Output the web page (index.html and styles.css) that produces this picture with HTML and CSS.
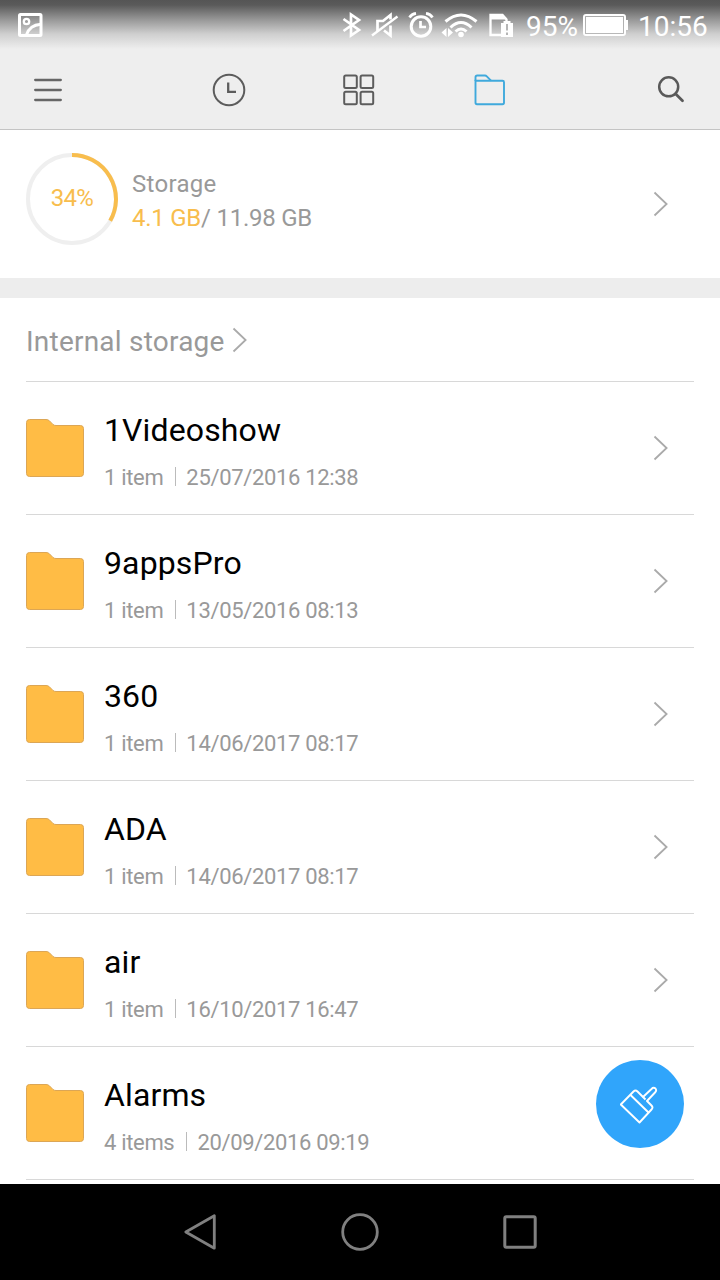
FILE: index.html
```html
<!DOCTYPE html>
<html lang="en">

<head>
    <meta charset="UTF-8">
    <meta name="viewport" content="width=device-width, initial-scale=1.0">
    <title>File Manager</title>
    <link rel="stylesheet" href="styles.css">
</head>

<body>

    <!-- Icons used more than once -->
    <svg class="sprite">
        <symbol id="arrow" viewBox="0 0 16 26">
            <path d="M1.5 1.5 13.6 13 1.5 24.5" fill="none" stroke="#aaa" stroke-width="1.8" />
        </symbol>
        <symbol id="folder" viewBox="0 0 58 58">
            <path d="M3.5 .5H20q2 0 3.3 1.200L27 5.500Q28 6.500 30 6.500H54.500q3 0 3 3v45q0 3-3 3h-51q-3 0-3-3v-51q0-3 3-3z" fill="#ffbc45" stroke="#dca655" />
        </symbol>
    </svg>

    <header class="header">
        <div class="status">
            <svg class="status-picture" width="26" height="26" viewBox="0 0 26 26" fill="none" stroke="#fff" stroke-width="3">
                <rect x="1.500" y="2.500" width="21.500" height="21" rx="1" />
                <circle cx="8.500" cy="9.500" r="2.700" stroke-width="2.300" />
                <path d="M8.500 23C10.500 16 15 12.800 23 12.200" />
            </svg>
            <svg class="status-icons" width="182" height="30" viewBox="0 0 182 30" fill="none" stroke="#fff" stroke-width="2.700">
                <!-- bluetooth -->
                <path d="M2.500 9 18 20 10 25.500V4.500L18 10 2.500 21" />
                <!-- muted -->
                <path d="M36.500 21V11H42L49.500 5V9.500M49.500 15.500V25.500L43 20.500" />
                <path d="M31 25.500 56.500 6.500" stroke-width="2.300" />
                <!-- alarm -->
                <circle cx="80" cy="16.500" r="9.800" stroke-width="3" />
                <path d="M79.500 11V17H85M68.500 7.500Q70.500 4 75 3.300M91.500 7.500Q89.500 4 85 3.300" />
                <!-- wifi -->
                <path d="M104.500 11.500Q120 -1.500 135.500 11.500M109.500 17.500Q120 7.500 130.500 17.500M114.500 21.500Q120 16.500 125.500 21.500" stroke-width="3" />
                <circle cx="120" cy="24.500" r="2.800" fill="#fff" stroke="none" />
                <path d="M105.500 18V27L100.500 22.500ZM107 18V27L112 22.500Z" fill="#fff" stroke="none" />
                <!-- sd card -->
                <path d="M161 25H149.500V5H161.500L165.500 9.500V12" stroke-width="2.300" />
                <path d="M149 4H161L166 8.500V9.500H149Z" fill="#fff" stroke="none" />
                <path d="M160 13H162.500V11H169.500V13H172V27H160Z" fill="#fff" stroke="none" />
                <path d="M166 14V20.500M166 22.500V25" stroke="#b5b5b5" stroke-width="2" />
            </svg>
            <span class="battery-level">95%</span>
            <svg class="battery" width="46" height="24" viewBox="0 0 46 24">
                <rect x="1" y="2" width="41" height="20" rx="2" fill="none" stroke="#fff" stroke-width="2" />
                <rect x="3" y="4" width="37" height="16" fill="#fff" />
                <rect x="2.500" y="3.500" width="38" height="17" fill="none" stroke="#b4b4b4" stroke-width=".8" />
                <path d="M43 7H45V17H43Z" fill="#fff" />
            </svg>
            <span class="clock">10:56</span>
        </div>

        <nav class="toolbar">
            <a class="tool menu">
                <svg width="28" height="24" viewBox="0 0 28 24" stroke="#666" stroke-width="2.300" stroke-linecap="round">
                    <path d="M1.200 2H26.800M1.200 12H26.800M1.200 22H26.800" />
                </svg>
            </a>
            <a class="tool tab">
                <svg width="34" height="34" viewBox="0 0 34 34" fill="none" stroke="#5c5c5c" stroke-width="2">
                    <circle cx="17" cy="17" r="15.300" />
                    <path d="M16.200 9.500V18.800H24" stroke-width="2.300" />
                </svg>
            </a>
            <a class="tool tab">
                <svg width="32" height="32" viewBox="0 0 32 32" fill="none" stroke="#5c5c5c" stroke-width="2">
                    <rect x="1.200" y="1.500" width="12.600" height="12.600" rx="1.500" />
                    <rect x="17.600" y="1.500" width="12.600" height="12.600" rx="1.500" />
                    <rect x="1.200" y="17.700" width="12.600" height="12.600" rx="1.500" />
                    <rect x="17.600" y="17.700" width="12.600" height="12.600" rx="1.500" />
                </svg>
            </a>
            <a class="tool tab">
                <svg width="32" height="32" viewBox="0 0 32 32" fill="none" stroke="#3fa9dc" stroke-width="1.900">
                    <path d="M2.500 7V3.200Q2.500 1.500 4.200 1.500H12Q13 1.500 13.800 2.300L18 6.600" />
                    <path d="M2.500 6.800H29.500Q31 6.800 31 8.300V28.500Q31 30.200 29.500 30.200H4Q2.500 30.200 2.500 28.500Z" />
                </svg>
            </a>
            <a class="tool search">
                <svg width="28" height="28" viewBox="0 0 28 28" fill="none" stroke="#595959" stroke-width="2.500" stroke-linecap="round">
                    <circle cx="11.700" cy="10.800" r="9.500" />
                    <path d="M18.500 17.800 25.500 24.800" stroke-width="2.800" />
                </svg>
            </a>
        </nav>
    </header>

    <section class="storage">
        <div class="ring">
            <svg class="ring-graph" width="92" height="92" viewBox="0 0 92 92" fill="none" stroke-width="4">
                <circle cx="46" cy="46" r="44" stroke="#efefef" />
                <path d="M46 2A44 44 0 0 1 84.200 67.800" stroke="#f8bd4d" />
            </svg>
            <span class="ring-text">34%</span>
        </div>
        <div class="storage-info">
            <p class="storage-name">Storage</p>
            <p class="storage-size"><span class="used">4.1 GB</span>/ 11.98 GB</p>
        </div>
        <svg class="arrow"><use href="#arrow" /></svg>
    </section>

    <main class="files">
        <div class="path">
            <span class="path-name">Internal storage</span>
            <svg class="arrow"><use href="#arrow" /></svg>
        </div>

        <div class="row">
            <svg class="folder"><use href="#folder" /></svg>
            <div class="row-text">
                <p class="name">1Videoshow</p>
                <p class="details"><span>1 item</span><span class="date">25/07/2016 12:38</span></p>
            </div>
            <svg class="arrow"><use href="#arrow" /></svg>
        </div>
        <div class="row">
            <svg class="folder"><use href="#folder" /></svg>
            <div class="row-text">
                <p class="name">9appsPro</p>
                <p class="details"><span>1 item</span><span class="date">13/05/2016 08:13</span></p>
            </div>
            <svg class="arrow"><use href="#arrow" /></svg>
        </div>
        <div class="row">
            <svg class="folder"><use href="#folder" /></svg>
            <div class="row-text">
                <p class="name">360</p>
                <p class="details"><span>1 item</span><span class="date">14/06/2017 08:17</span></p>
            </div>
            <svg class="arrow"><use href="#arrow" /></svg>
        </div>
        <div class="row">
            <svg class="folder"><use href="#folder" /></svg>
            <div class="row-text">
                <p class="name">ADA</p>
                <p class="details"><span>1 item</span><span class="date">14/06/2017 08:17</span></p>
            </div>
            <svg class="arrow"><use href="#arrow" /></svg>
        </div>
        <div class="row">
            <svg class="folder"><use href="#folder" /></svg>
            <div class="row-text">
                <p class="name">air</p>
                <p class="details"><span>1 item</span><span class="date">16/10/2017 16:47</span></p>
            </div>
            <svg class="arrow"><use href="#arrow" /></svg>
        </div>
        <div class="row">
            <svg class="folder"><use href="#folder" /></svg>
            <div class="row-text">
                <p class="name">Alarms</p>
                <p class="details"><span>4 items</span><span class="date">20/09/2016 09:19</span></p>
            </div>
        </div>

        <a class="clean">
            <svg width="40" height="40" viewBox="0 0 40 40" fill="none" stroke="#fff" stroke-width="1.900" stroke-linejoin="round">
                <path d="M.8 20.500 13.500 7.500Q15.500 5.500 17.500 7.500L23 13 31.500 5Q33.500 3 35.500 4.500Q37 6.500 35 8.500L27 17 31.500 21.500Q33.500 23.500 31.500 25.500L19.500 38.500Z" />
                <path d="M10.500 11 28.500 28.500M23 13 25.500 15.500" />
            </svg>
        </a>
    </main>

    <footer class="buttons">
        <a class="button">
            <svg width="40" height="40" viewBox="0 0 40 40" fill="none" stroke="#808080" stroke-width="2.800" stroke-linejoin="round">
                <path d="M34.300 3.800V36.200L5.800 20Z" />
            </svg>
        </a>
        <a class="button">
            <svg width="40" height="40" viewBox="0 0 40 40" fill="none" stroke="#808080" stroke-width="2.800">
                <circle cx="20" cy="20" r="17.300" />
            </svg>
        </a>
        <a class="button">
            <svg width="40" height="40" viewBox="0 0 40 40" fill="none" stroke="#808080" stroke-width="3">
                <rect x="4.800" y="4.800" width="30.400" height="30.400" rx="1.500" />
            </svg>
        </a>
    </footer>

</body>

</html>
```
FILE: styles.css
```css
* {
    box-sizing: border-box;
}

body {
    margin: 0;
    width: 720px;
    height: 1280px;
    display: flex;
    flex-direction: column;
    overflow: hidden;
    background-color: #fff;
    color: #999;
    font-family: Roboto, "Liberation Sans", sans-serif;
}

p {
    margin: 0;
}

svg {
    display: block;
    flex-shrink: 0;
}

.sprite {
    display: none;
}

/* Header */
.header {
    height: 130px;
    background-color: #eee;
    border-bottom: 1px solid #c4c4c4;
}

.status {
    display: flex;
    align-items: center;
    height: 50px;
    padding: 0 12px 0 18px;
    background: linear-gradient(#555 0, #5a5a5a 5px, #999 20px, #cfcfcf 34px, #eee 49px);
    color: #fff;
    font-size: 28px;
    line-height: 52px;
}

.status-icons {
    margin-left: auto;
}

.battery-level,
.clock {
    padding-top: 3px;
    white-space: nowrap;
}

.battery-level {
    width: 52px;
    margin-left: 3px;
    margin-right: 5px;
}

.clock {
    width: 70px;
    margin-left: 9px;
}

.toolbar {
    display: flex;
    height: 79px;
}

.tool {
    display: flex;
    justify-content: center;
    align-items: center;
    height: 80px;
    width: 130px;
}

.menu {
    width: 96px;
    margin-right: 68px;
}

.search {
    width: 98px;
    margin-left: auto;
}

/* Storage */
.storage {
    display: flex;
    align-items: center;
    height: 168px;
    padding: 0 51px 0 26px;
    border-bottom: 20px solid #ededed;
    font-size: 24px;
}

.ring {
    display: grid;
    place-items: center;
    width: 92px;
    height: 92px;
    margin: -10px 14px 0 0;
    color: #f8bd4d;
}

.ring-graph,
.ring-text {
    grid-area: 1 / 1;
}

.ring-text {
    margin-top: -2px;
    letter-spacing: -0.7px;
}

.storage-info {
    flex: 1;
    line-height: 34px;
    margin-top: -6px;
}

.storage-name {
    letter-spacing: 0.3px;
}

.storage-size {
    letter-spacing: -0.25px;
}

.used {
    color: #f8bd4d;
}

.arrow {
    width: 16px;
    height: 26px;
}

/* File list */
.files {
    position: relative;
    height: 886px;
    padding: 0 26px;
}

.path {
    display: flex;
    align-items: center;
    height: 84px;
    border-bottom: 1px solid #d8d8d8;
    font-size: 28px;
    letter-spacing: 0.22px;
}

.path-name {
    margin-right: 7px;
    line-height: 40px;
    padding-top: 5px;
}

.row {
    display: flex;
    align-items: center;
    height: 133px;
    padding-right: 25px;
    border-bottom: 1px solid #d8d8d8;
}

.folder {
    width: 58px;
    height: 58px;
    margin-right: 20px;
}

.row-text {
    flex: 1;
    padding-top: 7px;
}

.name {
    color: #000;
    font-size: 32px;
    line-height: 38px;
    letter-spacing: 0.12px;
}

.details {
    display: flex;
    align-items: center;
    margin-top: 15px;
    font-size: 22px;
    line-height: 28px;
    letter-spacing: -0.33px;
}

.date {
    display: flex;
    align-items: center;
}

.date::before {
    content: "";
    width: 1px;
    height: 19px;
    margin: -4px 10px 0 12px;
    background-color: #bbb;
}

.clean {
    position: absolute;
    right: 36px;
    bottom: 36px;
    display: flex;
    justify-content: center;
    align-items: center;
    width: 88px;
    height: 88px;
    border-radius: 50%;
    background-color: #30a5fb;
}

/* Phone buttons */
.buttons {
    display: flex;
    justify-content: center;
    height: 96px;
    background-color: #000;
}

.button {
    display: flex;
    justify-content: center;
    align-items: center;
    width: 160px;
}
```
